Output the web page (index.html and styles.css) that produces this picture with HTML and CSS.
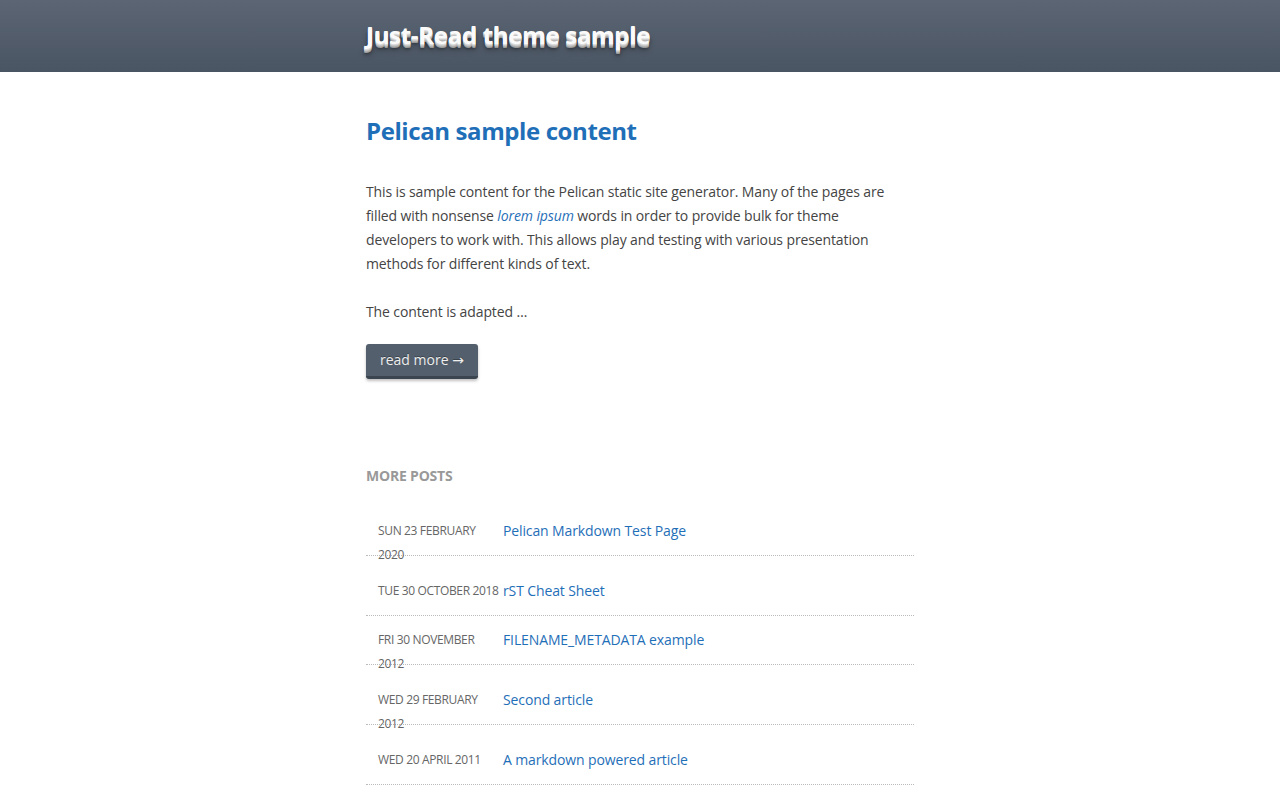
FILE: index.html
```html
<!DOCTYPE html>
<html lang="en">
<head>
<meta charset="utf-8">
<title>Just-Read theme sample</title>
<link rel="stylesheet" href="styles.css">
</head>
<body>
<header class="site-header">
  <div class="container">
    <h1 class="site-title"><a href="#">Just-Read theme sample</a></h1>
  </div>
</header>
<main class="container">
  <article class="post">
    <h2 class="post-title"><a href="#">Pelican sample content</a></h2>
    <p>This is sample content for the Pelican static site generator. Many of the pages are filled with nonsense <a class="em-link" href="#">lorem ipsum</a> words in order to provide bulk for theme developers to work with. This allows play and testing with various presentation methods for different kinds of text.</p>
    <p class="last">The content is adapted …</p>
    <a class="btn" href="#">read more →</a>
  </article>
  <section class="more-posts">
    <h3 class="more-title">More posts</h3>
    <ul class="post-list">
      <li><span class="date">Sun 23 February 2020</span><a href="#">Pelican Markdown Test Page</a></li>
      <li><span class="date">Tue 30 October 2018</span><a href="#">rST Cheat Sheet</a></li>
      <li><span class="date">Fri 30 November 2012</span><a href="#">FILENAME_METADATA example</a></li>
      <li><span class="date">Wed 29 February 2012</span><a href="#">Second article</a></li>
      <li><span class="date">Wed 20 April 2011</span><a href="#">A markdown powered article</a></li>
    </ul>
  </section>
</main>
</body>
</html>
```
FILE: styles.css
```css
html, body {
  margin: 0;
  padding: 0;
  background: #fff;
}
body {
  font-family: "Open Sans", "Noto Sans", "DejaVu Sans", sans-serif;
  font-size: 14px;
  line-height: 24px;
  letter-spacing: -0.12px;
  color: #444;
}
a {
  color: #1f6fb8;
  text-decoration: none;
}
.em-link {
  font-style: italic;
}
.container {
  width: 548px;
  margin: 0 auto;
}
.site-header {
  height: 72px;
  background: linear-gradient(to bottom, #5b6573 0%, #4a5563 100%);
}
.site-title {
  margin: 0;
  padding-top: 17px;
  font-size: 24px;
  line-height: 36px;
  font-weight: 700;
  letter-spacing: -0.3px;
}
.site-title a {
  color: #fafafa;
  text-shadow: 0 1px 0 #ddd, 0 2px 0 #c8c8c8, 0 3px 0 #b0b0b0, 0 4px 0 #999,
    0 5px 3px rgba(0, 0, 0, 0.35), 0 6px 6px rgba(0, 0, 0, 0.3);
}
.post {
  padding-top: 40px;
}
.post-title {
  margin: 0 0 30px;
  font-size: 24px;
  line-height: 38px;
  font-weight: 700;
  letter-spacing: -0.4px;
}
.post p {
  max-width: 540px;
  margin: 0 0 24px;
}
.post p.last {
  margin-bottom: 20px;
}
.btn {
  display: inline-block;
  padding: 4px 14px;
  background: #535f6c;
  color: #eee;
  border-radius: 3px;
  border-bottom: 3px solid #3b4550;
  box-shadow: 0 2px 3px rgba(0, 0, 0, 0.25);
  text-shadow: 0 -1px 0 rgba(0, 0, 0, 0.3);
  line-height: 24px;
  letter-spacing: 0;
}
.more-posts {
  padding-top: 85px;
}
.more-title {
  margin: 0 0 19px;
  font-size: 14px;
  line-height: 24px;
  font-weight: 700;
  color: #999;
  text-transform: uppercase;
  letter-spacing: -0.2px;
}
.post-list {
  list-style: none;
  margin: 0;
  padding: 0;
}
.post-list li {
  clear: left;
  padding: 12px 0;
  border-bottom: 1px dotted #bbb;
}
.date {
  float: left;
  width: 125px;
  padding-left: 12px;
  font-size: 12px;
  line-height: 24px;
  color: #666;
  text-transform: uppercase;
  letter-spacing: -0.35px;
}
```
